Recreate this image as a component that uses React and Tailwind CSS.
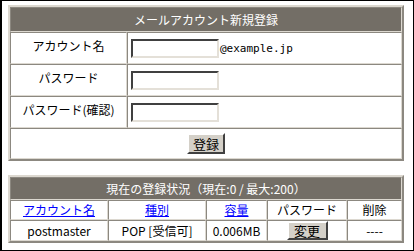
import React from 'react';

const font = { fontFamily: '"Noto Sans CJK JP", "Liberation Sans", sans-serif' };

const cell = "border border-t-[#8c8880] border-l-[#8c8880] border-b-[#dcd8d0] border-r-[#dcd8d0]";
const tableCls = "w-[396px] border-separate border-spacing-0 border-2 border-t-[#dcd8d0] border-l-[#dcd8d0] border-b-[#8c8880] border-r-[#8c8880] text-[12px] leading-[14px] text-black";

const TextBox = () => (
    <input
        type="text"
        className="w-[88px] h-[19px] bg-white border-2 border-t-[#404040] border-l-[#404040] border-b-[#e4e0d8] border-r-[#e4e0d8] outline-none"
    />
);

const WinButton = ({ children, className = '' }) => (
    <button className={`bg-[#d4d0c8] border-2 border-t-white border-l-white border-b-[#404040] border-r-[#404040] text-[13px] leading-none text-black ${className}`}>
        {children}
    </button>
);

const App = () => {
    const rows = [
        { label: 'アカウント名', suffix: '@example.jp' },
        { label: 'パスワード' },
        { label: 'パスワード(確認)' },
    ];

    return (
        <div style={font} className="w-[414px] h-[251px] bg-white border-black border-l-2 border-t border-r border-b pl-[6px] pt-[4px] overflow-hidden">
            <table className={tableCls}>
                <tbody>
                    <tr className="h-[25px]">
                        <td colSpan={2} className={`${cell} bg-[#736e66] text-white text-center`}>
                            メールアカウント新規登録
                        </td>
                    </tr>
                    {rows.map((r) => (
                        <tr key={r.label} className="h-[32px]">
                            <td className={`${cell} w-[117px] text-center align-middle pb-[4px]`}>{r.label}</td>
                            <td className={`${cell} pl-[3px]`}>
                                <div className="flex items-end">
                                    <TextBox />
                                    {r.suffix && <span className="ml-[1px] mb-[2px] text-[11px]" style={{ fontFamily: '"DejaVu Sans Mono", monospace' }}>{r.suffix}</span>}
                                </div>
                            </td>
                        </tr>
                    ))}
                    <tr className="h-[31px]">
                        <td colSpan={2} className={`${cell} text-center`}>
                            <WinButton className="w-[38px] h-[21px]">登録</WinButton>
                        </td>
                    </tr>
                </tbody>
            </table>

            <table className={`${tableCls} mt-[14px]`}>
                <tbody>
                    <tr className="h-[23px]">
                        <td colSpan={5} className={`${cell} bg-[#736e66] text-white text-center`}>
                            現在の登録状況（現在:0 / 最大:200）
                        </td>
                    </tr>
                    <tr className="h-[20px] text-center">
                        <td className={`${cell} w-[98px]`}><a href="#" className="text-[#0000ff] underline">アカウント名</a></td>
                        <td className={`${cell} w-[98px]`}><a href="#" className="text-[#0000ff] underline">種別</a></td>
                        <td className={`${cell} w-[61px]`}><a href="#" className="text-[#0000ff] underline">容量</a></td>
                        <td className={`${cell} w-[80px]`}>パスワード</td>
                        <td className={cell}>削除</td>
                    </tr>
                    <tr className="h-[21px] text-center">
                        <td className={cell}>postmaster</td>
                        <td className={cell}>POP [受信可]</td>
                        <td className={cell}>0.006MB</td>
                        <td className={cell}>
                            <WinButton className="w-[41px] h-[19px] align-middle">変更</WinButton>
                        </td>
                        <td className={cell}>----</td>
                    </tr>
                </tbody>
            </table>
        </div>
    );
};

export default App;
